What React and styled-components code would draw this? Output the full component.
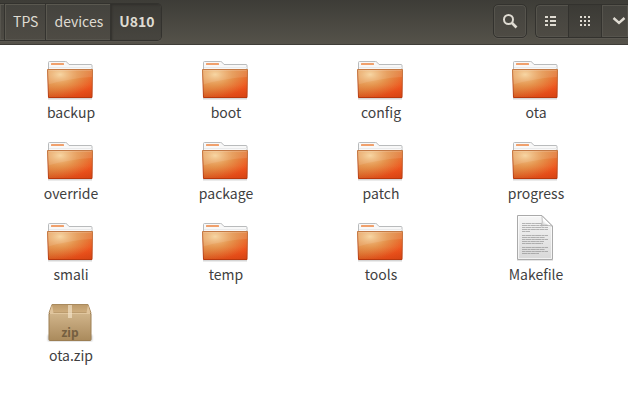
import React from "react";
import styled, { createGlobalStyle, css } from "styled-components";

const GlobalStyle = createGlobalStyle`
  * { box-sizing: border-box; }
  body {
    margin: 0;
    background: #ffffff;
    color: #3f3f3f;
    font-family: "Noto Sans CJK SC", "Noto Sans", sans-serif;
    font-size: 14px;
  }
  button { font: inherit; color: inherit; margin: 0; padding: 0; }
`;

const Window = styled.div`
  min-height: 100vh;
  overflow: hidden;
`;

const Toolbar = styled.header`
  display: flex;
  align-items: flex-start;
  justify-content: space-between;
  height: 45px;
  padding-top: 4px;
  background: linear-gradient(#3d3c37, #55524a);
  border-bottom: 1px solid #3f3d38;
  color: #dfdbd2;
`;

const Tools = styled.div`
  display: flex;
  gap: 8px;
`;

const frame = css`
  display: flex;
  height: 34px;
  border: 1px solid #33322e;
  box-shadow: 0 1px 0 #5a5750, inset 0 0 0 1px #56544d;
  background: linear-gradient(#44433e, #4e4b44);
  overflow: hidden;
`;

const PathBar = styled.nav`
  ${frame}
  height: 38px;
  margin-top: -1px;
  border-left: 0;
  border-radius: 0 5px 5px 0;
`;

const PathButton = styled.button`
  padding: 0 7px 2px 8px;
  border: 0;
  border-right: 1px solid #34332f;
  box-shadow: inset 1px 1px 0 #5a5850;
  background: transparent;
  line-height: 34px;
  &:last-child { border-right: 0; }
  ${(p) => p.$current && css`
    font-weight: 700;
    background: linear-gradient(#3b3a35, #47453f);
    box-shadow: inset 1px 1px 2px #31302c;
  `}
`;

const ParentEdge = styled.button`
  width: 5px;
  border: 0;
  border-right: 1px solid #34332f;
  background: transparent;
  box-shadow: inset 0 1px 0 #5a5850;
`;

const ToolGroup = styled.div`
  ${frame}
  border-radius: ${(p) => (p.$open ? "5px 0 0 5px" : "5px")};
  border-right-width: ${(p) => (p.$open ? "0" : "1px")};
`;

const ToolButton = styled.button`
  display: flex;
  align-items: center;
  justify-content: center;
  width: 32px;
  border: 0;
  background: transparent;
  ${(p) => p.$active && css`
    width: 34px;
    background: linear-gradient(#3b3a35, #47453f);
    border: solid #33322e;
    border-width: 0 1px;
  `}
  ${(p) => p.$edge && css`
    width: 26px;
    justify-content: flex-end;
    padding-right: 1px;
    box-shadow: inset 1px 0 0 #56544d;
  `}
`;

const Files = styled.main`
  display: grid;
  grid-template-columns: repeat(auto-fill, 130px);
  gap: 10px 25px;
  padding: 8px 5px;
`;

const FileItem = styled.button`
  display: flex;
  flex-direction: column;
  align-items: center;
  border: 0;
  background: transparent;
  svg { display: block; }
`;

const FileName = styled.span`
  padding-left: 2px;
  line-height: 23px;
`;

const FolderIcon = () => (
  <svg width="48" height="48" viewBox="0 0 48 48" aria-hidden="true">
    <defs>
      <linearGradient id="folderBase" x1="0" y1="0" x2="1" y2="1">
        <stop offset="0" stopColor="#e0985a" />
        <stop offset=".45" stopColor="#df8038" />
        <stop offset=".8" stopColor="#f0561f" />
        <stop offset="1" stopColor="#e04c18" />
      </linearGradient>
      <radialGradient id="folderGlow" cx=".28" cy=".18" r=".8">
        <stop offset="0" stopColor="#f6d29a" />
        <stop offset=".5" stopColor="#e9a05a" stopOpacity=".6" />
        <stop offset="1" stopColor="#e88040" stopOpacity="0" />
      </radialGradient>
      <linearGradient id="folderShade" x1="0" y1="0" x2="0" y2="1">
        <stop offset=".55" stopColor="#d03c0c" stopOpacity="0" />
        <stop offset="1" stopColor="#cc3a0c" stopOpacity=".5" />
      </linearGradient>
      <linearGradient id="folderEdge" x1="0" y1="0" x2="0" y2="1">
        <stop offset="0" stopColor="#c47a45" />
        <stop offset="1" stopColor="#b8380e" />
      </linearGradient>
    </defs>
    <path d="M2 45.5H46" stroke="#000" strokeOpacity=".16" strokeWidth="2" />
    <path d="M2.500 18V9.500Q2.500 8.500 3.500 8.500H19.500Q20.500 8.500 21 9.200L23 11.500H45Q46 11.500 46 12.500V18Z" fill="#f8f8f8" stroke="#b9bbbc" />
    <rect x="5" y="10" width="13" height="2" rx=".5" fill="#f0a06c" />
    <path d="M3 14.500H46" stroke="#e9eaeb" />
    <path d="M1.500 16.500H46.500L46 44.500H2.500Z" fill="url(#folderBase)" />
    <path d="M1.500 16.500H46.500L46 44.500H2.500Z" fill="url(#folderShade)" />
    <path d="M1.500 16.500H46.500L46 44.500H2.500Z" fill="url(#folderGlow)" />
    <path d="M2 17H46V24Q25 25 2.200 31.500Z" fill="#fff" fillOpacity=".1" />
    <path d="M2.500 17.500H45.500" stroke="#fff" strokeOpacity=".15" />
    <path d="M1.500 16.500H46.500L46 44.500H2.500Z" fill="none" stroke="url(#folderEdge)" strokeLinejoin="round" />
  </svg>
);

const DOC_LINES = [
  [8, 26], [10, 26], [12, 26], [14, 26], [16, 8],
  [20, 26], [22, 23], [24, 26], [26, 22], [28, 21],
  [32, 26], [34, 23], [36, 26], [38, 17],
];

const DocumentIcon = () => (
  <svg width="48" height="48" viewBox="0 0 48 48" aria-hidden="true">
    <defs>
      <linearGradient id="paper" x1="0" y1="0" x2="0" y2="1">
        <stop offset="0" stopColor="#f6f6f6" />
        <stop offset="1" stopColor="#d8d8d8" />
      </linearGradient>
      <linearGradient id="fold" x1="0" y1="1" x2=".7" y2=".3">
        <stop offset="0" stopColor="#b8b8b8" />
        <stop offset=".6" stopColor="#fff" />
      </linearGradient>
    </defs>
    <path d="M6 45.500H42" stroke="#000" strokeOpacity=".1" />
    <path d="M6.500 .5H31L41.500 11V44.500H6.500Z" fill="url(#paper)" stroke="#aaa" />
    <path d="M7.500 1.500H30.500M7.500 1.500V43.500H40.500V12" fill="none" stroke="#fff" strokeOpacity=".65" />
    {DOC_LINES.map(([y, w]) => (
      <path key={y} d={`M11 ${y + 0.5}h${w}`} stroke="#777" strokeOpacity=".5" strokeDasharray={y % 4 ? "5 .4 3 .4" : "3 .4 6 .4"} />
    ))}
    <path d="M31 1Q32 8 30 11Q35 9 41 11Z" fill="url(#fold)" stroke="#aaa" strokeWidth=".7" strokeLinejoin="round" />
  </svg>
);

const ArchiveIcon = () => (
  <svg width="48" height="48" viewBox="0 0 48 48" aria-hidden="true">
    <defs>
      <linearGradient id="boxFront" x1="0" y1="0" x2="0" y2="1">
        <stop offset="0" stopColor="#d0b48a" />
        <stop offset="1" stopColor="#aa8a5c" />
      </linearGradient>
      <linearGradient id="boxTop" x1="0" y1="0" x2="0" y2="1">
        <stop offset="0" stopColor="#bd9b6b" />
        <stop offset="1" stopColor="#d0af80" />
      </linearGradient>
      <filter id="boxBlur"><feGaussianBlur stdDeviation="1" /></filter>
    </defs>
    <path d="M2 39H46V45H2Z" fill="#000" opacity=".28" filter="url(#boxBlur)" />
    <path d="M3 17L6 8.500H42L45 17Z" fill="url(#boxTop)" stroke="#a98a5e" strokeLinejoin="round" />
    <path d="M3.500 17L6 9L7.500 17ZM44.500 17L42 9L40.500 17Z" fill="#dfc39b" />
    <path d="M3 17.500H45V43.500Q45 44.500 44 44.500H4Q3 44.500 3 43.500Z" fill="url(#boxFront)" stroke="#9c7e53" />
    <path d="M4 17.500H44" stroke="#e0c69e" />
    <path d="M22 9H26V22H22Z" fill="#f4e5cb" fillOpacity=".65" />
    <text x="24" y="41" textAnchor="middle" fontFamily="Open Sans, sans-serif" fontWeight="700" fontSize="12" fill="#755f40">zip</text>
  </svg>
);

const ICONS = { folder: FolderIcon, document: DocumentIcon, archive: ArchiveIcon };

const FILES = [
  ...["backup", "boot", "config", "ota", "override", "package", "patch", "progress", "smali", "temp", "tools"].map(
    (name) => ({ name, kind: "folder" })
  ),
  { name: "Makefile", kind: "document" },
  { name: "ota.zip", kind: "archive" },
];

const SearchIcon = () => (
  <svg width="16" height="16" viewBox="0 0 16 16" fill="none" stroke="currentColor" aria-hidden="true">
    <circle cx="6.500" cy="6.500" r="4.500" strokeWidth="2" />
    <path d="M10 10L14.500 14.500" strokeWidth="2.600" />
  </svg>
);

const ListIcon = () => (
  <svg width="16" height="16" viewBox="0 0 16 16" fill="currentColor" shapeRendering="crispEdges" aria-hidden="true">
    {[3, 7, 11].map((y) => (
      <path key={y} d={`M1 ${y}h3v2h-3zM6 ${y}h6v2h-6z`} />
    ))}
  </svg>
);

const GridIcon = () => (
  <svg width="16" height="16" viewBox="0 0 16 16" fill="currentColor" shapeRendering="crispEdges" aria-hidden="true">
    {[3, 7, 11].map((y) => (
      <path key={y} d={`M3 ${y}h2v2h-2zM7 ${y}h2v2h-2zM11 ${y}h2v2h-2z`} />
    ))}
  </svg>
);

const ChevronIcon = () => (
  <svg width="16" height="16" viewBox="0 0 16 16" fill="none" stroke="currentColor" strokeWidth="2.400" aria-hidden="true">
    <path d="M2.500 5L8 10L13.500 5" />
  </svg>
);

export default function App() {
  return (
    <Window>
      <GlobalStyle />
      <Toolbar>
        <PathBar aria-label="Path">
          <ParentEdge aria-label="Parent folder" />
          <PathButton>TPS</PathButton>
          <PathButton>devices</PathButton>
          <PathButton $current aria-current="page">U810</PathButton>
        </PathBar>
        <Tools>
          <ToolGroup>
            <ToolButton aria-label="Search"><SearchIcon /></ToolButton>
          </ToolGroup>
          <ToolGroup $open>
            <ToolButton aria-label="List view"><ListIcon /></ToolButton>
            <ToolButton $active aria-label="Grid view" aria-pressed="true"><GridIcon /></ToolButton>
            <ToolButton $edge aria-label="View options"><ChevronIcon /></ToolButton>
          </ToolGroup>
        </Tools>
      </Toolbar>
      <Files>
        {FILES.map(({ name, kind }) => {
          const Icon = ICONS[kind];
          return (
            <FileItem key={name}>
              <Icon />
              <FileName>{name}</FileName>
            </FileItem>
          );
        })}
      </Files>
    </Window>
  );
}
